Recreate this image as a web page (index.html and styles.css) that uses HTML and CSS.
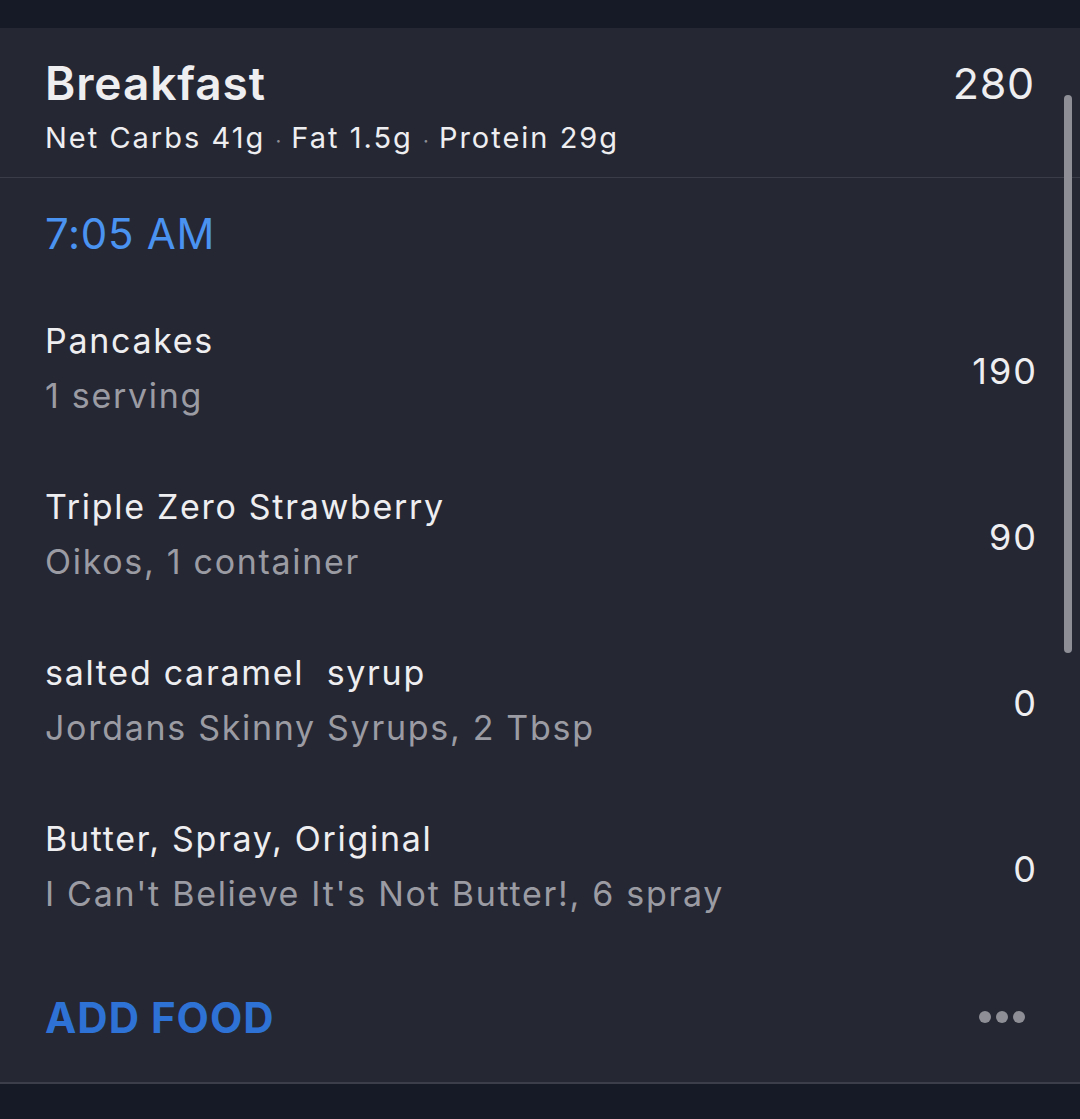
FILE: index.html
```html
<!DOCTYPE html>
<html>
<head>
<meta charset="UTF-8">
<title>Breakfast</title>
<link rel="stylesheet" href="styles.css">
</head>
<body>
	<div class="topband"></div>
	<div class="card">
		<div class="header">
			<div class="header-text">
				<div class="meal-title">Breakfast</div>
				<div class="macros">Net Carbs 41g <span class="dot">·</span> Fat 1.5g <span class="dot">·</span> Protein 29g</div>
			</div>
			<div class="meal-total">280</div>
		</div>
		<div class="time">7:05 AM</div>
		<div class="item">
			<div class="item-text">
				<div class="item-name">Pancakes</div>
				<div class="item-serving">1 serving</div>
			</div>
			<div class="item-cal">190</div>
		</div>
		<div class="item">
			<div class="item-text">
				<div class="item-name">Triple Zero Strawberry</div>
				<div class="item-serving">Oikos, 1 container</div>
			</div>
			<div class="item-cal">90</div>
		</div>
		<div class="item">
			<div class="item-text">
				<div class="item-name">salted caramel&nbsp; syrup</div>
				<div class="item-serving">Jordans Skinny Syrups, 2 Tbsp</div>
			</div>
			<div class="item-cal">0</div>
		</div>
		<div class="item">
			<div class="item-text">
				<div class="item-name">Butter, Spray, Original</div>
				<div class="item-serving">I Can't Believe It's Not Butter!, 6 spray</div>
			</div>
			<div class="item-cal">0</div>
		</div>
		<div class="footer">
			<div class="add-food">ADD FOOD</div>
			<div class="more"><span></span><span></span><span></span></div>
		</div>
		<div class="scrollbar"></div>
	</div>
</body>
</html>
```
FILE: styles.css
```css
* {
	margin: 0;
	padding: 0;
	box-sizing: border-box;
}

body {
	background: #161a26;
	font-family: Inter, "Noto Sans", sans-serif;
	color: #eeeef1;
	height: 1119px;
	overflow: hidden;
}

.topband {
	height: 28px;
}

.card {
	position: relative;
	background: #252733;
	border-bottom: 2px solid #3c3e4a;
}

/* header */
.header {
	height: 150px;
	padding: 0 46px 0 45px;
	display: flex;
	justify-content: space-between;
	align-items: flex-start;
	border-bottom: 1px solid #3a3c47;
}

.header-text {
	padding-top: 28px;
}

.meal-title {
	font-size: 46px;
	font-weight: 600;
	line-height: 54px;
	letter-spacing: 0.9px;
}

.macros {
	font-size: 29px;
	line-height: 40px;
	margin-top: 8px;
	letter-spacing: 2px;
}

.macros .dot {
	color: #8e8f96;
	font-size: 20px;
	letter-spacing: 0;
}

.meal-total {
	font-size: 43px;
	line-height: 54px;
	padding-top: 28px;
	letter-spacing: 0.8px;
	margin-right: -1px;
}

/* time */
.time {
	height: 110px;
	padding: 0 45px;
	display: flex;
	align-items: center;
	font-size: 42px;
	letter-spacing: 0.7px;
	color: #4b93f1;
}

/* items */
.item {
	height: 166px;
	padding: 0 45px;
	display: flex;
	justify-content: space-between;
	align-items: center;
}

.item-text {
	padding-bottom: 6px;
}

.item-name {
	font-size: 34px;
	line-height: 55px;
	letter-spacing: 1.7px;
}

.item-serving {
	font-size: 34px;
	line-height: 55px;
	letter-spacing: 1.7px;
	color: #9b9ca3;
}

.item-cal {
	font-size: 36px;
	letter-spacing: 2px;
	margin-right: -3px;
}

/* footer */
.footer {
	height: 130px;
	padding: 0 55px 0 45px;
	display: flex;
	justify-content: space-between;
	align-items: center;
}

.add-food {
	font-size: 42px;
	font-weight: 700;
	color: #2f72d6;
	letter-spacing: 1px;
}

.more {
	display: flex;
	gap: 5px;
}

.more span {
	width: 12px;
	height: 12px;
	border-radius: 50%;
	background: #8e8f96;
}

.scrollbar {
	position: absolute;
	right: 8px;
	top: 67px;
	width: 8px;
	height: 558px;
	border-radius: 4px;
	background: #8e8f96;
}
```
